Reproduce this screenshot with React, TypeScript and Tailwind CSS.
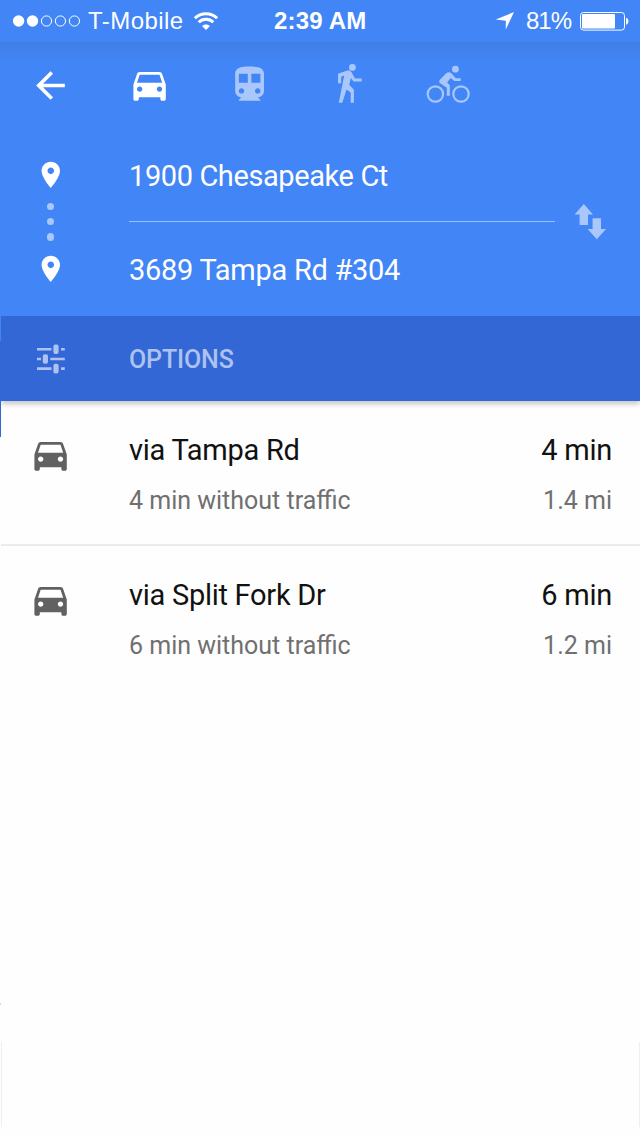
const CAR =
  "M18.92 6.01C18.72 5.42 18.16 5 17.5 5h-11c-.66 0-1.21.42-1.42 1.01L3 12v8c0 .55.45 1 1 1h1c.55 0 1-.45 1-1v-1h12v1c0 .55.45 1 1 1h1c.55 0 1-.45 1-1v-8l-2.08-5.99zM6.5 16c-.83 0-1.5-.67-1.5-1.5S5.67 13 6.5 13s1.5.67 1.5 1.5S7.33 16 6.5 16zm11 0c-.83 0-1.5-.67-1.5-1.5s.67-1.5 1.5-1.5 1.5.67 1.5 1.5-.67 1.5-1.5 1.5zM5 11l1.5-4.5h11L19 11H5z";
const BACK = "M20 11H7.83l5.59-5.59L12 4l-8 8 8 8 1.41-1.41L7.83 13H20v-2z";
const TRAIN =
  "M12 2c-4.42 0-8 .5-8 4v9.5C4 17.43 5.57 19 7.5 19L6 20.5v.5h12v-.5L16.5 19c1.93 0 3.5-1.57 3.5-3.5V6c0-3.5-3.58-4-8-4zM7.5 17c-.83 0-1.5-.67-1.5-1.5S6.67 14 7.5 14s1.5.67 1.5 1.5S8.33 17 7.5 17zm3.5-6H6V6h5v5zm5.5 6c-.83 0-1.5-.67-1.5-1.5s.67-1.5 1.5-1.5 1.5.67 1.5 1.5-.67 1.5-1.5 1.5zm1.5-6h-5V6h5v5z";
const PIN =
  "M12 2C8.13 2 5 5.13 5 9c0 5.25 7 13 7 13s7-7.75 7-13c0-3.87-3.13-7-7-7zm0 9.5c-1.38 0-2.5-1.12-2.5-2.5s1.12-2.5 2.5-2.5 2.5 1.12 2.5 2.5-1.12 2.5-2.5 2.5z";

function Glyph({ d, className }: { d: string; className: string }) {
  return (
    <svg viewBox="0 0 24 24" fill="currentColor" className={className}>
      <path d={d} />
    </svg>
  );
}

function StatusBar() {
  return (
    <div className="flex h-[42px] items-center pl-3">
      <svg width="70" height="14" viewBox="0 0 70 14" className="mb-[1px] shrink-0">
        <circle cx="6.6" cy="7" r="5.7" fill="white" />
        <circle cx="20.5" cy="7" r="5.7" fill="white" />
        <g fill="none" stroke="white" strokeWidth="1">
          <circle cx="34.5" cy="7" r="5.1" />
          <circle cx="48.4" cy="7" r="5.1" />
          <circle cx="62.4" cy="7" r="5.1" />
        </g>
      </svg>
      <span className="ml-[6px] w-[105px] whitespace-nowrap text-[24px] leading-[42px] tracking-[0.45px]">T-Mobile</span>
      <svg width="26" height="20" viewBox="0 0 26 20" className="mb-[1px] shrink-0" fill="none" stroke="white">
        <path d="M1.9 7.2C8 1.1 18 1.1 24.1 7.2" strokeWidth="3" />
        <path d="M5.7 11.3C9.8 7.3 16.2 7.3 20.3 11.3" strokeWidth="3" />
        <path d="M13 19 9 15C11.1 12.9 14.9 12.9 17 15z" fill="white" stroke="none" />
      </svg>
      <span className="ml-[55px] w-[221px] whitespace-nowrap text-[24px] font-bold leading-[42px] tracking-[0.2px]">2:39 AM</span>
      <svg width="20" height="20" viewBox="0 0 20 20" className="shrink-0" fill="white">
        <path d="M19 1 10.8 18.5V9.7L0.8 8.6z" />
      </svg>
      <span className="ml-[11px] w-[53px] whitespace-nowrap text-[24px] leading-[42px] tracking-[-1px]">81%</span>
      <svg width="50" height="20" viewBox="0 0 50 20" className="shrink-0">
        <rect x="1.5" y="1.5" width="44" height="17.6" rx="3" fill="none" stroke="white" />
        <rect x="3" y="3" width="33" height="14.6" rx="1" fill="white" />
        <path d="M47 6.7c3.2.8 3.2 6.2 0 7z" fill="white" />
      </svg>
    </div>
  );
}

function Modes() {
  return (
    <div className="flex h-[88px] items-start bg-linear-to-b from-[#3f7ee6] to-[#4285f6] to-[22%] pt-[21px] pl-[29px]">
      <Glyph d={BACK} className="mt-[1px] size-[43px] shrink-0" />
      <Glyph d={CAR} className="ml-[56.4px] size-[43.2px] shrink-0" />
      <Glyph d={TRAIN} className="ml-[56.4px] size-[43.2px] shrink-0 text-[#a9c7fb]" />
      <svg width="200" height="44" viewBox="328 63 200 44" className="ml-[57px] shrink-0 text-[#a9c7fb]" fill="currentColor">
        <circle cx="352.4" cy="67.4" r="3.4" />
        <path d="M338 83.2v-9.4l9.4-3.2c1.6-.5 3 0 4 1.5l3.6 6.4h6.7v3h-8.2l-2.6-3.6-1.7 6.9 4.7 5v13h-3.2V92.6l-4.2-3.1-4.2 13.3h-3.5l5.4-27.2-3 1.1v6.5z" />
        <g fill="none" stroke="currentColor">
          <circle cx="435.4" cy="94" r="7.7" strokeWidth="2.2" />
          <circle cx="461" cy="94" r="7.7" strokeWidth="2.2" />
        </g>
        <circle cx="455.4" cy="69.2" r="3.4" />
        <path d="M446.8 95.7v-7.9l-6.3-4.2c-1.6-1.2-1.7-2.8-.4-4.1l6.4-6.4c1.4-1.3 3.4-1.3 4.6 0l4.6 5.1h5v2.9h-6.4l-3.6-3-3.6 4.4 2.7 2.8v10.4z" />
      </svg>
    </div>
  );
}

function Waypoints() {
  return (
    <div className="flex h-[186px] pt-[22px]">
      <div className="flex w-[129px] flex-col items-start pl-[34.8px]">
        <Glyph d={PIN} className="mt-[7px] size-[31.6px]" />
        <div className="mt-[12.4px] mb-[9.4px] flex h-[41px] w-[31.6px] flex-col items-center justify-between pb-[3.4px]">
          <i className="size-[7.4px] rounded-full bg-[#a9c7fb]" />
          <i className="size-[7.4px] rounded-full bg-[#a9c7fb]" />
          <i className="size-[7.4px] rounded-full bg-[#a9c7fb]" />
        </div>
        <Glyph d={PIN} className="size-[31.6px]" />
      </div>
      <div className="flex w-[426px] flex-col font-[Roboto,sans-serif] text-[29px] leading-[48px]">
        <div className="h-[69px] tracking-[-0.4px]">1900 Chesapeake Ct</div>
        <div className="h-px bg-[#9cbffa]" />
        <div className="pt-[24px] tracking-[-0.28px]">3689 Tampa Rd #304</div>
      </div>
      <svg width="34" height="38" viewBox="574 203 34 38" className="mt-[51px] ml-[19px]" fill="#a9c7fb">
        <path d="m583.8 204 9.2 10.5h-5V225h-8.4v-10.5h-5z" />
        <path d="M592.6 218.2h8.4V229h5l-9.2 10.2-9.2-10.2h5z" />
      </svg>
    </div>
  );
}

function Options() {
  return (
    <div className="relative ml-px flex h-[85px] items-center bg-[#3367d6] text-[#adc2ef] shadow-[0_3px_5px_rgba(0,0,0,0.22)] [clip-path:inset(0_0_-12px_0)]">
      <svg width="128" height="30" viewBox="1 344 128 30" fill="currentColor" className="shrink-0">
        <path d="M37 348h14.5v2.6H37zM61 348h3.8v2.6H61zM37 357.7h4v2.6h-4zM50.3 357.7h14.5v2.6H50.3zM37 367.3h14.5v2.6H37zM61 367.3h3.8v2.6H61z" />
        <rect x="53.4" y="344.5" width="5.2" height="9.6" rx="2" />
        <rect x="42.8" y="354.2" width="5.2" height="9.6" rx="2" />
        <rect x="53.4" y="363.8" width="5.2" height="9.6" rx="2" />
      </svg>
      <span className="pt-[2px] font-[Roboto,sans-serif] text-[25px] font-medium leading-[30px] tracking-[-0.12px]">OPTIONS</span>
    </div>
  );
}

interface RouteProps {
  name: string;
  time: string;
  detail: string;
  distance: string;
}

function Route({ name, time, detail, distance }: RouteProps) {
  return (
    <div className="flex h-[145px] pt-[30px] pr-[28px] pl-[29.4px] font-[Roboto,sans-serif]">
      <Glyph d={CAR} className="mt-[1.8px] size-[43.2px] shrink-0 text-[#616161]" />
      <div className="ml-[56.4px] flex-1 pt-px">
        <div className="flex justify-between text-[29px] leading-[36px] tracking-[-0.27px] text-[#111]">
          <span>{name}</span>
          <span>{time}</span>
        </div>
        <div className="mt-[17px] flex justify-between text-[25px] leading-[32px] text-[#707070]">
          <span>{detail}</span>
          <span>{distance}</span>
        </div>
      </div>
    </div>
  );
}

export default function App() {
  return (
    <main className="relative flex h-[1136px] w-[640px] flex-col overflow-hidden bg-[#fefefe]">
      <header className="bg-[#4285f6] font-['Liberation_Sans',Arial,sans-serif] text-white">
        <StatusBar />
        <Modes />
        <Waypoints />
        <Options />
      </header>
      <section>
        <Route name="via Tampa Rd" time="4 min" detail="4 min without traffic" distance="1.4 mi" />
        <hr className="-mt-[2px] ml-px h-[2px] border-0 bg-[#ebebeb]" />
        <Route name="via Split Fork Dr" time="6 min" detail="6 min without traffic" distance="1.2 mi" />
      </section>
      <div className="absolute top-[341px] left-0 h-24 w-px bg-[#3367d6]" />
      <div className="absolute top-[1003px] left-0 h-[2px] w-px bg-[#d8d8d8]" />
      <div className="absolute top-[1042px] left-px h-[85px] w-[639px] border-x border-[#efefef]" />
    </main>
  );
}
